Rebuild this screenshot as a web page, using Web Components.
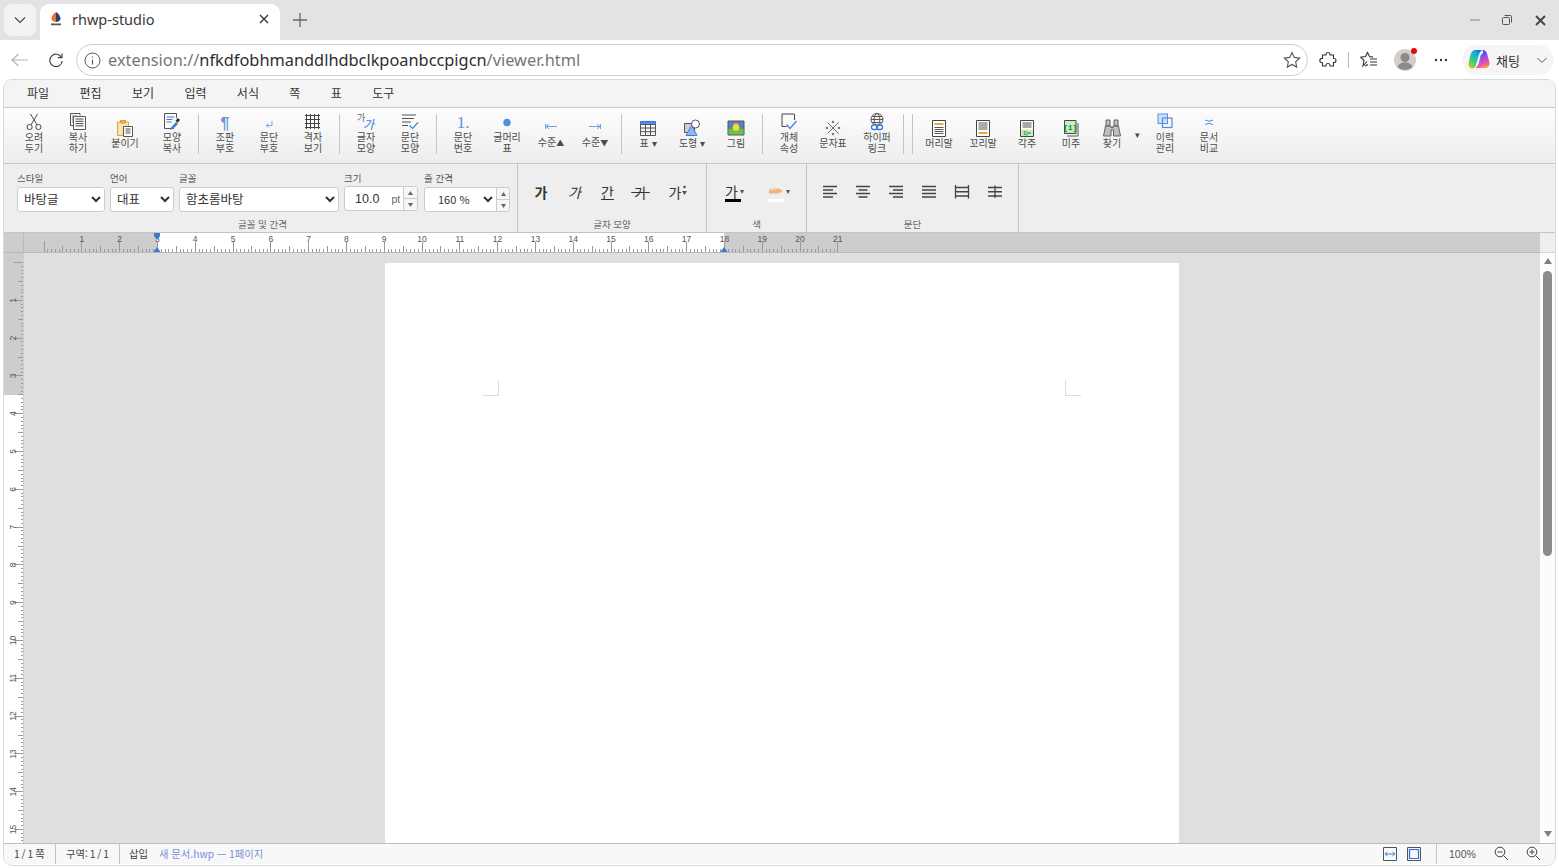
<!DOCTYPE html>
<html lang="ko">
<head>
<meta charset="utf-8">
<title>rhwp-studio</title>
<style>
    html, body { margin: 0; height: 100%; overflow: hidden; background: #fff; }
    body { display: flex; flex-direction: column; height: 868px; font-family: "Noto Sans CJK KR", "Noto Sans", sans-serif; }
</style>
</head>
<body>
<browser-tabs></browser-tabs>
<browser-bar></browser-bar>
<hwp-app>
    <hwp-menu></hwp-menu>
    <hwp-toolbar>
        <tool-btn><svg slot="icon" width="18" height="18" viewBox="0 0 18 18" fill="none" stroke="#4a4a4a"><circle cx="4.6" cy="14" r="2.6"/><circle cx="13.4" cy="14" r="2.6"/><path d="M6 11.8 12.6 .8M12 11.8 5.4 .8"/></svg>오려<br>두기</tool-btn>
        <tool-btn><svg slot="icon" width="18" height="18" viewBox="0 0 18 18" fill="none" stroke="#555"><path d="M11 2.5V.5H1.5v12H4"/><path d="M4.5 3.5h12v13h-12z" fill="#fff"/><path d="M6.5 6h8M6.5 8.3h8M6.5 10.6h8M6.5 12.9h8" stroke="#444"/><path d="M3 3h5M3 5h1M3 7h1M3 9h1" stroke="#777"/></svg>복사<br>하기</tool-btn>
        <tool-btn w="50"><svg slot="icon" width="18" height="18" viewBox="0 0 18 18" fill="none"><path d="M1.5 3h11v13.5h-11z" fill="#fbe3ad" stroke="#e3a33a"/><path d="M4.5 1.5h5V4h-5z" fill="#eeb04a" stroke="#d99a30"/><path d="M7.5 7.5h9v10h-9z" fill="#fff" stroke="#555"/><path d="M9.5 10h5M9.5 12h5M9.5 14h5" stroke="#555"/></svg>붙이기</tool-btn>
        <tool-btn><svg slot="icon" width="18" height="18" viewBox="0 0 18 18" fill="none"><path d="M11 15.5H1.5V.5h12V5" stroke="#555"/><path d="M3.5 4h8M3.5 6.5h6M3.5 9h5" stroke="#3f7fd6" stroke-width="1.2"/><path d="M8 14.5 13 9l2 2-5 5-2.6.8z" fill="#3f7fd6"/><path d="M12.5 7.5 15 5l2 2-2.5 3z" fill="#333"/></svg>모양<br>복사</tool-btn>
        <tool-sep></tool-sep>
        <tool-btn><svg slot="icon" width="18" height="18" viewBox="0 0 18 18" overflow="visible"><text x="9" y="16" text-anchor="middle" font-size="16" font-weight="700" fill="#6a97cf" font-family="Liberation Sans">¶</text></svg>조판<br>부호</tool-btn>
        <tool-btn><svg slot="icon" width="18" height="18" viewBox="0 0 18 18" fill="none" stroke="#7ba6d8"><path d="M12 8v4.5H6.5"/><path d="M8.5 10.5l-2 2 2 2"/></svg>문단<br>부호</tool-btn>
        <tool-btn><svg slot="icon" width="18" height="18" viewBox="0 0 18 18" fill="none" stroke="#444"><path d="M1 2.500h15M1 6.500h15M1 10.500h15M1 14.500h15M2.500 1v15M6.500 1v15M10.500 1v15M14.500 1v15"/></svg>격자<br>보기</tool-btn>
        <tool-sep></tool-sep>
        <tool-btn><svg slot="icon" width="18" height="18" viewBox="0 0 18 18" overflow="visible"><text x="0" y="8" font-size="9" fill="#666" font-family="Noto Sans CJK KR">가</text><text x="6" y="16" font-size="12" font-style="italic" fill="#2f7fe0" font-family="Noto Sans CJK KR">가</text></svg>글자<br>모양</tool-btn>
        <tool-btn><svg slot="icon" width="18" height="18" viewBox="0 0 18 18" fill="none"><path d="M1 2h14M1 5.500h12M1 9h9M1 12.500h6" stroke="#555"/><path d="M8.500 12.500l3 3 5.500-6" stroke="#3f85dd" stroke-width="1.200"/></svg>문단<br>모양</tool-btn>
        <tool-sep></tool-sep>
        <tool-btn><svg slot="icon" width="20" height="18" viewBox="0 0 20 18" overflow="visible"><text x="10" y="15" text-anchor="middle" font-size="17" fill="#5b93d8" font-family="Liberation Serif">1.</text></svg>문단<br>번호</tool-btn>
        <tool-btn><svg slot="icon" width="18" height="18" viewBox="0 0 18 18"><circle cx="9" cy="9.500" r="3.700" fill="#4f8fdd"/></svg>글머리<br>표</tool-btn>
        <tool-btn><svg slot="icon" width="18" height="18" viewBox="0 0 18 18" fill="none" stroke="#6fa3e0"><path d="M3.500 6v5M4 8.500h11M4 8.500l3-2.300M4 8.500l3 2.300"/></svg>수준<span style="font-size:8px">▲</span></tool-btn>
        <tool-btn><svg slot="icon" width="18" height="18" viewBox="0 0 18 18" fill="none" stroke="#6fa3e0"><path d="M14.500 6v5M3 8.500h11M14 8.500l-3-2.300M14 8.500l-3 2.300"/></svg>수준<span style="font-size:8px">▼</span></tool-btn>
        <tool-sep></tool-sep>
        <tool-btn><svg slot="icon" width="18" height="18" viewBox="0 0 18 18" fill="none"><path d="M1.500 2.500h15v3h-15z" fill="#4f8fe8" stroke="#3a78d0"/><path d="M1.500 5.500h15v11h-15zM1.500 9h15M1.500 12.700h15M6.500 5.500v11M11.500 5.500v11" stroke="#555"/></svg>표 ▾</tool-btn>
        <tool-btn><svg slot="icon" width="18" height="18" viewBox="0 0 18 18" fill="none"><path d="M1.500 4.500h10v9h-10z" fill="#cfcfcf" stroke="#555"/><circle cx="12.500" cy="5" r="4" fill="#fff" stroke="#555"/><path d="M8.500 6.500 14 16.500H3z" fill="#8fb8f0" stroke="#3f7fe0"/></svg>도형 ▾</tool-btn>
        <tool-btn><svg slot="icon" width="18" height="18" viewBox="0 0 18 18" fill="none"><path d="M1 2h16v14H1z" fill="#5a7fbf" stroke="#555"/><path d="M1.500 10h15v5.500h-15z" fill="#6fbf4a"/><circle cx="9" cy="8.500" r="3.300" fill="#f4dc2c"/><path d="M7 4.500l1 1.500 1-1.500 1 1.500 1-1.500" stroke="#f4dc2c"/></svg>그림</tool-btn>
        <tool-sep></tool-sep>
        <tool-btn><svg slot="icon" width="18" height="18" viewBox="0 0 18 18" fill="none"><path d="M14 1H2v12.500h4.500" stroke="#444"/><path d="M14.500 1v6" stroke="#444"/><path d="M6.500 11.500l3.500 4 6.500-7.500" stroke="#3f85dd" stroke-width="1.300"/></svg>개체<br>속성</tool-btn>
        <tool-btn><svg slot="icon" width="18" height="18" viewBox="0 0 18 18" fill="none" stroke="#666"><path d="M3.500 3.500l11 11M14.500 3.500l-11 11"/><circle cx="9" cy="3" r=".8" fill="#666"/><circle cx="9" cy="15" r=".8" fill="#666"/><circle cx="3" cy="9" r=".8" fill="#666"/><circle cx="15" cy="9" r=".8" fill="#666"/></svg>문자표</tool-btn>
        <tool-btn><svg slot="icon" width="18" height="18" viewBox="0 0 18 18" fill="none"><g stroke="#555"><circle cx="9" cy="6.500" r="6"/><ellipse cx="9" cy="6.500" rx="2.800" ry="6"/><path d="M3 6.500h12M4 3.500h10M4 9.500h10"/></g><g stroke="#3a78d8" stroke-width="1.300"><rect x="3.500" y="12" width="6" height="4.500" rx="2.200" fill="#fff"/><rect x="8.500" y="12" width="6" height="4.500" rx="2.200"/></g></svg>하이퍼<br>링크</tool-btn>
        <tool-sep></tool-sep>
        <tool-sep></tool-sep>
        <tool-btn><svg slot="icon" width="18" height="18" viewBox="0 0 18 18" fill="none"><path d="M2.500 1.500h13v16h-13z" fill="#fff" stroke="#444"/><path d="M4.500 5h9" stroke="#f0a830" stroke-width="2"/><path d="M4.500 8.500h9M4.500 10.500h9M4.500 12.500h9M4.500 14.500h9" stroke="#555"/></svg>머리말</tool-btn>
        <tool-btn><svg slot="icon" width="18" height="18" viewBox="0 0 18 18" fill="none"><path d="M2.500 1.500h13v16h-13z" fill="#fff" stroke="#444"/><path d="M4.500 4h9M4.500 6h9M4.500 8h9M4.500 10h9" stroke="#555"/><path d="M4.500 14h9" stroke="#f0a830" stroke-width="2"/></svg>꼬리말</tool-btn>
        <tool-btn><svg slot="icon" width="18" height="18" viewBox="0 0 18 18" fill="none" overflow="visible"><path d="M2.500 1.500h13v16h-13z" fill="#fff" stroke="#444"/><path d="M4.500 4h9M4.500 6h9M4.500 8h9" stroke="#555"/><path d="M3 10.500h12v6.500H3z" fill="#c9ecc6"/><text x="9" y="16" text-anchor="middle" font-size="5.500" font-weight="700" fill="#1a8f1a" font-family="Liberation Sans">1)=</text></svg>각주</tool-btn>
        <tool-btn><svg slot="icon" width="18" height="18" viewBox="0 0 18 18" fill="none" overflow="visible"><path d="M16 4v13H5" stroke="#555"/><path d="M2.500 1.500h11.500v13H2.500z" fill="#c9ecc6" stroke="#444"/><text x="8.200" y="10.500" text-anchor="middle" font-size="7.500" font-weight="700" fill="#0f8f0f" font-family="Liberation Mono">[1]</text></svg>미주</tool-btn>
        <tool-btn w="38"><svg slot="icon" width="18" height="18" viewBox="0 0 18 18" fill="#bdbdbd" stroke="#555" stroke-width=".9"><path d="M3 1h4v6H3zM11 1h4v6h-4z"/><path d="M2.500 7h5.500v1.500h2V7h5.500l2 10h-7v-6H8v6H.5z"/></svg>찾기</tool-btn>
        <tool-drop>▾</tool-drop>
        <tool-btn><svg slot="icon" width="18" height="18" viewBox="0 0 18 18" fill="none" stroke="#4f8fe8"><rect x="2" y="1" width="9.500" height="9.500" fill="#cfe2fa"/><rect x="6.500" y="5" width="9.500" height="9.500" stroke-width="1.200"/></svg>이력<br>관리</tool-btn>
        <tool-btn><svg slot="icon" width="18" height="18" viewBox="0 0 18 18" fill="none" stroke="#4f8fe8"><path d="M5 7q4 2.500 8 0M5 11.500q4-2.500 8 0"/></svg>문서<br>비교</tool-btn>
    </hwp-toolbar>
    <hwp-format>
        <fmt-group caption="글꼴 및 간격" width="514" pad="13" capshift="4">
            <hwp-select label="스타일" width="88" options="바탕글,본문,개요 1"></hwp-select>
            <hwp-select label="언어" width="64" options="대표,한글,영문"></hwp-select>
            <hwp-select label="글꼴" width="160" options="함초롬바탕,함초롬돋움,맑은 고딕"></hwp-select>
            <size-field label="크기"></size-field>
            <hwp-select label="줄 간격" width="73" spin center options="160 %,100 %,200 %" style="margin-left:1px"></hwp-select>
        </fmt-group>
        <fmt-group caption="글자 모양" width="189" pad="6" top>
            <glyph-btn w="34"><b>가</b></glyph-btn>
            <glyph-btn w="33"><i>가</i></glyph-btn>
            <glyph-btn w="33"><u>간</u></glyph-btn>
            <glyph-btn w="33"><s>&#8201;가&#8201;</s></glyph-btn>
            <glyph-btn w="43"><span>가</span><svg width="7" height="14" viewBox="0 0 7 14" fill="#555"><circle cx="3.500" cy="2" r="1.300"/><path d="M1 6h5L3.500 10z"/></svg></glyph-btn>
        </fmt-group>
        <fmt-group caption="색" width="100" pad="0" top>
            <color-btn w="52" bar="#000"><span>가</span></color-btn>
            <color-btn w="36" bar="#fff"><svg width="16" height="10" viewBox="0 0 16 10"><path d="M1 2.500h9.500L15 5l-4.500 2.500H1z" fill="#e7b878"/><path d="M1 3.500h6" stroke="#f6dcb6"/></svg></color-btn>
        </fmt-group>
        <fmt-group caption="문단" width="212" pad="6.500" top>
            <align-btn kind="left"></align-btn>
            <align-btn kind="center"></align-btn>
            <align-btn kind="right"></align-btn>
            <align-btn kind="justify"></align-btn>
            <align-btn kind="dist"></align-btn>
            <align-btn kind="split"></align-btn>
        </fmt-group>
    </hwp-format>
    <hwp-workspace></hwp-workspace>
    <hwp-status></hwp-status>
</hwp-app>

<script>
const CJK = '"Noto Sans CJK KR", "Noto Sans", sans-serif';
const SPIN = `<i><svg width="5" height="4" viewBox="0 0 5 4" fill="#666"><path d="M2.500 0 5 4H0z"/></svg></i><i><svg width="5" height="4" viewBox="0 0 5 4" fill="#666"><path d="M0 0h5L2.500 4z"/></svg></i>`;

class BrowserTabs extends HTMLElement {
    constructor(){
        super();
        this.attachShadow({mode:"open"}).innerHTML = `
            <style>
                :host { display: flex; height: 40px; flex: none; background: #e3e3e3; box-sizing: border-box; padding: 4px 0 0 4px; align-items: flex-start; }
                .list { width: 32px; height: 32px; border-radius: 8px; background: #f3f3f3; display: flex; align-items: center; justify-content: center; }
                .tab { width: 240px; height: 36px; margin-left: 4px; background: #fff; border-radius: 9px 9px 0 0; display: flex; align-items: center; box-sizing: border-box; padding: 0 10px 6px 10px; }
                .fav { width: 12px; height: 14px; flex: none; }
                .title { margin-left: 10px; font: 14.500px "Noto Sans", sans-serif; color: #3a3a3a; flex: 1; }
                .plus { margin: 7px 0 0 11px; width: 18px; height: 18px; }
                .ctl { margin-left: auto; display: flex; align-items: center; height: 32px; padding-right: 13px; }
                .ctl svg + svg { margin-left: 22px; }
                .ctl svg + svg + svg { margin-left: 23px; }
            </style>
            <div class="list"><svg width="14" height="14" viewBox="0 0 14 14" fill="none" stroke="#444" stroke-width="1.100"><path d="M2 4.500 7 9.500 12 4.500"/></svg></div>
            <div class="tab">
                <svg class="fav" viewBox="0 0 12 14"><path d="M6 0C3 2 1.500 4.500 1.500 6.500 1.500 8.800 3.500 10 6 10z" fill="#e8732a"/><path d="M6 0c3 2 4.500 4.500 4.500 6.500C10.500 8.800 8.500 10 6 10z" fill="#26456e"/><rect x="1" y="11.500" width="10" height="1.800" fill="#555"/></svg>
                <span class="title">rhwp-studio</span>
                <svg width="12" height="12" viewBox="0 0 12 12" stroke="#333" stroke-width="1.300"><path d="M2 2l8 8M10 2l-8 8"/></svg>
            </div>
            <svg class="plus" viewBox="0 0 18 18" stroke="#666" stroke-width="1.300"><path d="M9 2v14M2 9h14"/></svg>
            <div class="ctl">
                <svg width="10" height="10" viewBox="0 0 10 10" stroke="#9a9a9a" stroke-width="1.200"><path d="M0 5h10"/></svg>
                <svg width="10" height="10" viewBox="0 0 10 10" fill="none" stroke="#555"><rect x=".5" y="2.500" width="7" height="7" rx="1"/><path d="M2.500 .5h6a1 1 0 0 1 1 1v6"/></svg>
                <svg width="11" height="11" viewBox="0 0 11 11" stroke="#444" stroke-width="1.900"><path d="M1 1l9 9M10 1l-9 9"/></svg>
            </div>`;
    }
}
customElements.define("browser-tabs",BrowserTabs);

class BrowserBar extends HTMLElement {
    constructor(){
        super();
        this.attachShadow({mode:"open"}).innerHTML = `
            <style>
                :host { display: flex; height: 39px; flex: none; align-items: center; background: #fff; box-sizing: border-box; padding: 4px 5px 3px 0; }
                .nav { display: flex; justify-content: center; flex: none; }
                .addr { flex: 1; height: 32px; margin-left: 4px; border: 1px solid #cfcfcf; border-radius: 16px; display: flex; align-items: center; box-sizing: border-box; padding: 0 6px 0 7px; }
                .url { margin-left: 7px; flex: 1; font: 16.350px "Noto Sans", sans-serif; color: #767676; }
                .url b { font-weight: 400; color: #2e2e2e; }
                .tool { display: flex; align-items: center; justify-content: center; flex: none; }
                .sep { width: 1px; height: 16px; background: #bbb; flex: none; }
                .avatar { position: relative; width: 22px; height: 22px; }
                .dot { position: absolute; right: -1px; top: -1px; width: 6px; height: 6px; border-radius: 50%; background: #e00b0b; }
                .chat { width: 92px; height: 30px; border-radius: 15px; background: #f5f5f5; display: flex; align-items: center; margin-left: 14px; padding-left: 6px; box-sizing: border-box; flex: none; }
                .chat span { margin-left: 6px; font: 13px ${CJK}; color: #333; flex: 1; }
                .chat svg:last-child { margin-right: 6px; }
            </style>
            <div class="nav" style="width:40px"><svg width="18" height="14" viewBox="0 0 18 14" fill="none" stroke="#b4b4b4" stroke-width="1.200"><path d="M17 7H1M7.500 1 1 7l6.500 6"/></svg></div>
            <div class="nav" style="width:32px"><svg width="16" height="16" viewBox="0 0 16 16" fill="none" stroke="#444" stroke-width="1.200"><path d="M13.500 5.500A6.200 6.200 0 1 0 14.200 9"/><path d="M14 1.500v4.200H9.800"/></svg></div>
            <div class="addr">
                <svg width="17" height="17" viewBox="0 0 17 17" fill="none" stroke="#555"><circle cx="8.500" cy="8.500" r="7.500"/><path d="M8.500 7.500v5M8.500 4.500v1.300" stroke-width="1.100"/></svg>
                <span class="url">extension://<b>nfkdfobhmanddlhdbclkpoanbccpigcn</b>/viewer.html</span>
                <svg width="18" height="18" viewBox="0 0 18 18" fill="none" stroke="#555" stroke-width="1.100"><path d="M9 1.500l2.300 4.900 5.300.7-3.900 3.700 1 5.300L9 13.500l-4.700 2.600 1-5.300L1.400 7.100l5.300-.7z"/></svg>
            </div>
            <div class="tool" style="margin-left:11px"><svg width="18" height="18" viewBox="0 0 18 18" fill="none" stroke="#333" stroke-width="1.100"><path d="M7 3.500a2 2 0 0 1 4 0V4h3.500v3.500H15a2 2 0 0 1 0 4h-.5V15H11v-.5a2 2 0 0 0-4 0v.5H3.500v-3.200H3a2.200 2.200 0 0 1 0-4.400h.5V4H7z"/></svg></div>
            <div class="sep" style="margin:0 11px"></div>
            <div class="tool"><svg width="18" height="18" viewBox="0 0 18 18" fill="none" stroke="#333" stroke-width="1.100"><path d="M7 10.500 3 15l1-5.500L.8 6.300 5.500 5.600 7.500 1.500l2 4.100 3.500.5"/><path d="M10 8h7M10 11h7M10 14h7M5 15l3-1.600"/></svg></div>
            <div class="tool avatar" style="margin-left:16px"><svg width="22" height="22" viewBox="0 0 22 22"><circle cx="11" cy="11" r="11" fill="#d2cfcb"/><circle cx="11" cy="8.500" r="4.500" fill="#8d8985"/><path d="M3.500 18c1.500-3.500 4-4.500 7.500-4.500s6 1 7.500 4.500a11 11 0 0 1-15 0z" fill="#8d8985"/></svg><i class="dot"></i></div>
            <div class="tool" style="margin-left:18px"><svg width="14" height="4" viewBox="0 0 14 4" fill="#333"><circle cx="2" cy="2" r="1.200"/><circle cx="7" cy="2" r="1.200"/><circle cx="12" cy="2" r="1.200"/></svg></div>
            <div class="chat">
                <svg width="22" height="22" viewBox="0 0 22 22">
                    <defs>
                        <linearGradient id="cpa" x1="0" y1="1" x2=".7" y2="0"><stop offset="0" stop-color="#f9c81e"/><stop offset=".4" stop-color="#3fd06a"/><stop offset=".8" stop-color="#18a8e0"/><stop offset="1" stop-color="#1470e8"/></linearGradient>
                        <linearGradient id="cpb" x1=".3" y1="0" x2=".7" y2="1"><stop offset="0" stop-color="#1c50e8"/><stop offset=".45" stop-color="#9a48f0"/><stop offset=".8" stop-color="#f0589a"/><stop offset="1" stop-color="#ff9a40"/></linearGradient>
                    </defs>
                    <path d="M14.500 1c2.500 0 4 1.500 4.700 4l2.300 8.500c.6 3-1.500 5.500-4.500 5.500H7.500c2.500 0 4-1.500 4.700-4l2-7.500C15 5 15.200 3 14.500 1z" fill="url(#cpb)"/>
                    <path d="M7 1h7.500c-2 .7-3.200 3-4 6l-2 7.500C8 17.500 6.300 19.500 3.800 19.500 1.300 19.500 0 17 .6 13.800l1.700-7.300C3 3.500 4.500 1 7 1z" fill="url(#cpa)"/>
                    <path d="M15.500 4.500c-2 0-2.800 1.500-3.300 3.500l-1.500 6c-.5 1.800-1.500 3.500-3 5h7c1.500-1 2.200-2.500 2.700-4.500z" fill="url(#cpb)" opacity=".9"/>
                </svg>
                <span>채팅</span>
                <svg width="12" height="12" viewBox="0 0 12 12" fill="none" stroke="#555"><path d="M1.500 4 6 8.500 10.500 4"/></svg>
            </div>`;
    }
}
customElements.define("browser-bar",BrowserBar);

class HwpApp extends HTMLElement {
    constructor(){
        super();
        this.attachShadow({mode:"open"}).innerHTML = `
            <style>
                :host { display: flex; flex-direction: column; height: 787px; flex: none; margin: 0 3px; box-sizing: border-box; border: 1px solid #d9d9d9; border-radius: 9px; overflow: hidden; font-family: ${CJK}; }
            </style>
            <slot></slot>`;
    }
}
customElements.define("hwp-app",HwpApp);

class HwpMenu extends HTMLElement {
    constructor(){
        super();
        var items = ["파일","편집","보기","입력","서식","쪽","표","도구"];
        this.attachShadow({mode:"open"}).innerHTML = `
            <style>
                :host { display: flex; height: 28px; flex: none; box-sizing: border-box; background: #f4f4f4; border-bottom: 1px solid #c9c9c9; padding: 0 0 2px 7.800px; align-items: center; }
                span { padding: 0 15.200px; font-size: 12px; color: #333; }
            </style>
            ${items.map(t=>`<span>${t}</span>`).join("")}`;
    }
}
customElements.define("hwp-menu",HwpMenu);

class HwpToolbar extends HTMLElement {
    constructor(){
        super();
        this.attachShadow({mode:"open"}).innerHTML = `
            <style>
                :host { display: flex; height: 56px; flex: none; box-sizing: border-box; background: linear-gradient(#fdfdfd,#ededed); border-bottom: 1px solid #c9c9c9; padding: 1px 0 0 8px; align-items: flex-start; }
            </style>
            <slot></slot>`;
    }
}
customElements.define("hwp-toolbar",HwpToolbar);

class ToolBtn extends HTMLElement {
    constructor(){
        super();
        this.attachShadow({mode:"open"}).innerHTML = `
            <style>
                :host { display: flex; flex-direction: column; align-items: center; justify-content: center; flex: none; width: 44px; height: 48px; font-size: 10px; line-height: 11px; color: #4c4c4c; text-align: center; }
                .icon { display: flex; height: 18px; justify-content: center; }
            </style>
            <div class="icon"><slot name="icon"></slot></div>
            <div><slot></slot></div>`;
        if(this.hasAttribute("w")) this.style.width = this.getAttribute("w")+"px";
    }
}
customElements.define("tool-btn",ToolBtn);

class ToolSep extends HTMLElement {
    constructor(){
        super();
        this.attachShadow({mode:"open"}).innerHTML = `
            <style>
                :host { display: block; flex: none; width: 1px; height: 40px; background: #c4c4c4; margin: 5px 4px 0 4px; }
            </style>`;
    }
}
customElements.define("tool-sep",ToolSep);

class ToolDrop extends HTMLElement {
    constructor(){
        super();
        this.attachShadow({mode:"open"}).innerHTML = `
            <style>
                :host { display: block; flex: none; width: 12px; padding-top: 20px; font-size: 9px; line-height: 12px; color: #444; text-align: center; }
            </style>
            <slot></slot>`;
    }
}
customElements.define("tool-drop",ToolDrop);

class HwpFormat extends HTMLElement {
    constructor(){
        super();
        this.attachShadow({mode:"open"}).innerHTML = `
            <style>
                :host { display: flex; height: 69px; flex: none; box-sizing: border-box; background: #eee; border-bottom: 1px solid #c4c4c4; }
            </style>
            <slot></slot>`;
    }
}
customElements.define("hwp-format",HwpFormat);

class FmtGroup extends HTMLElement {
    constructor(){
        super();
        this.attachShadow({mode:"open"}).innerHTML = `
            <style>
                :host { display: flex; flex-direction: column; flex: none; box-sizing: border-box; border-right: 1px solid #c4c4c4; padding-top: 8px; }
                :host([top]) { padding-top: 14px; }
                .body { flex: 1; display: flex; align-items: flex-start; gap: 0; }
                .cap { height: 14px; line-height: 14px; margin-bottom: 1px; text-align: center; font-size: 9.500px; color: #666; }
            </style>
            <div class="body"><slot></slot></div>
            <div class="cap" style="padding-left:${this.getAttribute("capshift")||0}px">${this.getAttribute("caption")}</div>`;
        this.style.width = this.getAttribute("width")+"px";
        this.shadowRoot.querySelector(".body").style.paddingLeft = this.getAttribute("pad")+"px";
    }
}
customElements.define("fmt-group",FmtGroup);

class HwpSelect extends HTMLElement {
    constructor(){
        super();
        var options = this.getAttribute("options").split(",");
        var spin = this.hasAttribute("spin");
        this.attachShadow({mode:"open"}).innerHTML = `
            <style>
                :host { display: block; flex: none; margin-right: 5px; }
                label { display: block; height: 12px; line-height: 12px; margin-bottom: 2px; font-size: 9.500px; color: #555; }
                .row { display: flex; }
                select { display: block; box-sizing: border-box; height: 25px; margin-top: 1px; font: 12.500px ${CJK}; color: #333; background: #fff; border: 1px solid #ccc; border-radius: 3px; padding: 0 0 2px 2px; outline: none; }
                :host([center]) select { padding-left: 9px; font-size: 11px; border-radius: 3px 0 0 3px; }
                .spin { width: 13px; height: 25px; margin-top: 1px; box-sizing: border-box; border: 1px solid #ccc; border-left: 0; border-radius: 0 3px 3px 0; background: #f6f6f6; display: flex; flex-direction: column; }
                .spin i { flex: 1; display: flex; align-items: center; justify-content: center; }
                .spin i + i { border-top: 1px solid #ccc; }
            </style>
            <label>${this.getAttribute("label")}</label>
            <div class="row">
                <select style="width:${this.getAttribute("width")}px">${options.map(o=>`<option>${o}</option>`).join("")}</select>
                ${spin?`<div class="spin">${SPIN}</div>`:""}
            </div>`;
    }
}
customElements.define("hwp-select",HwpSelect);

class SizeField extends HTMLElement {
    constructor(){
        super();
        this.attachShadow({mode:"open"}).innerHTML = `
            <style>
                :host { display: block; flex: none; margin-right: 5px; }
                label { display: block; height: 12px; line-height: 12px; margin-bottom: 2px; font-size: 9.500px; color: #555; }
                .row { display: flex; height: 25px; margin-top: 1px; box-sizing: border-box; width: 74px; border: 1px solid #ccc; border-radius: 3px; background: #fff; align-items: center; }
                .v { margin-left: 10px; width: 37px; font: 12.500px "Liberation Sans", sans-serif; color: #333; }
                .u { width: 12px; font: 10.500px "Liberation Sans", sans-serif; color: #666; }
                .spin { margin-left: auto; width: 13px; height: 23px; border-left: 1px solid #ccc; background: #f6f6f6; display: flex; flex-direction: column; border-radius: 0 3px 3px 0; }
                .spin i { flex: 1; display: flex; align-items: center; justify-content: center; }
                .spin i + i { border-top: 1px solid #ccc; }
            </style>
            <label>${this.getAttribute("label")}</label>
            <div class="row"><span class="v">10.0</span><span class="u">pt</span><div class="spin">${SPIN}</div></div>`;
    }
}
customElements.define("size-field",SizeField);

class GlyphBtn extends HTMLElement {
    constructor(){
        super();
        this.attachShadow({mode:"open"}).innerHTML = `
            <style>
                :host { display: flex; flex: none; height: 28px; align-items: center; justify-content: center; font-size: 14px; color: #333; }
                ::slotted(b) { font-weight: 700; }
            </style>
            <slot></slot>`;
        this.style.width = this.getAttribute("w")+"px";
    }
}
customElements.define("glyph-btn",GlyphBtn);

class ColorBtn extends HTMLElement {
    constructor(){
        super();
        this.attachShadow({mode:"open"}).innerHTML = `
            <style>
                :host { display: flex; flex: none; height: 28px; justify-content: center; font-size: 14px; color: #333; }
                .in { display: flex; flex-direction: column; align-items: flex-start; margin-top: 4px; margin-left: 3px; }
                .g { display: flex; align-items: center; height: 17px; }
                .a { font-size: 8px; color: #555; margin-left: 2px; }
                .bar { width: 16px; height: 3px; }
            </style>
            <div class="in">
                <div class="g"><slot></slot><span class="a">▾</span></div>
                <div class="bar" style="background:${this.getAttribute("bar")}"></div>
            </div>`;
        this.style.width = this.getAttribute("w")+"px";
    }
}
customElements.define("color-btn",ColorBtn);

class AlignBtn extends HTMLElement {
    constructor(){
        super();
        var paths = {
            left: "M1 1.500h14M1 5h10M1 8.500h14M1 12h10",
            center: "M1 1.500h14M3.500 5h9M1 8.500h14M3.500 12h9",
            right: "M1 1.500h14M5 5h10M1 8.500h14M5 12h10",
            justify: "M1 1.500h14M1 5h14M1 8.500h14M1 12h14",
            dist: "M1.500 0v13.500M14.500 0v13.500M2 2.500h12M2 6.750h12M2 11h12",
            split: "M1 2.500h14M1 6.750h14M1 11h14M8 .5v12.500"
        };
        this.attachShadow({mode:"open"}).innerHTML = `
            <style>
                :host { display: flex; flex: none; width: 33px; height: 28px; align-items: center; justify-content: center; }
            </style>
            <svg width="16" height="14" viewBox="0 0 16 14" fill="none" stroke="#444" stroke-width="1.300"><path d="${paths[this.getAttribute("kind")]}"/></svg>`;
    }
}
customElements.define("align-btn",AlignBtn);

class HwpRuler extends HTMLElement {
    constructor(){
        super();
        var vertical = this.hasAttribute("vertical");
        var cm = 37.8;
        var origin = +this.getAttribute("origin");
        var count = +this.getAttribute("count");
        var length = +this.getAttribute("length");
        var marks = "";
        var labels = "";
        var across = 20;
        for(var i=0;i<=count*10;i++){
            var p = origin+i*cm/10;
            if(p>length) break;
            var size = i%10==0?10:(i%5==0?6:3);
            if(i%10==0 && i==0) size = vertical?10:11;
            if(vertical) marks += `M${across-size} ${p.toFixed(1)}H${across-1}`;
            else marks += `M${p.toFixed(1)} ${across-1-size}V${across-1}`;
            if(i%10==0 && i>0){
                if(vertical) labels += `<text transform="translate(11 ${p.toFixed(1)}) rotate(-90)" text-anchor="middle" y="1">${i/10}</text>`;
                else labels += `<text x="${p.toFixed(1)}" y="9" text-anchor="middle">${i/10}</text>`;
            }
        }
        var w = vertical?across:length, h = vertical?length:across;
        var start = +this.getAttribute("start"), end = +this.getAttribute("end");
        var band = vertical
            ? `<rect width="${across}" height="${start}" fill="#cdcdcd"/>`
            : `<rect x="${start}" width="${end-start}" height="${across}" fill="#fff"/>`;
        this.attachShadow({mode:"open"}).innerHTML = `
            <style>
                :host { display: block; background: ${vertical?"#fff":"#cdcdcd"}; overflow: hidden; }
                svg { display: block; }
                text { font: 8.500px "Liberation Sans", sans-serif; fill: #555; }
            </style>
            <svg width="${w}" height="${h}" viewBox="0 0 ${w} ${h}">
                ${band}
                <path d="${marks}" stroke="#9a9a9a" fill="none" shape-rendering="crispEdges"/>
                ${labels}
                ${vertical?"":`<g fill="#3a7ac8"><path d="M${start-3} 0h6v3l-3 4-3-4z"/><path d="M${start-3.5} 19l3.500-5 3.500 5z"/><path d="M${end-3.5} 19l3.500-5 3.500 5z"/></g><path d="M0 19.500H${w}" stroke="#b9b9b9"/>`}
            </svg>`;
    }
}
customElements.define("hwp-ruler",HwpRuler);

class HwpPage extends HTMLElement {
    constructor(){
        super();
        this.attachShadow({mode:"open"}).innerHTML = `
            <style>
                :host { display: block; position: relative; width: 794px; height: 1123px; margin: 10px auto 0; background: #fff; }
                i { position: absolute; top: 117px; width: 15px; height: 15px; border-bottom: 1px solid #dcdcdc; }
                .l { left: 98px; border-right: 1px solid #dcdcdc; }
                .r { left: 680px; border-left: 1px solid #dcdcdc; }
            </style>
            <i class="l"></i><i class="r"></i>`;
    }
}
customElements.define("hwp-page",HwpPage);

class HwpScrollbar extends HTMLElement {
    constructor(){
        super();
        this.attachShadow({mode:"open"}).innerHTML = `
            <style>
                :host { display: flex; flex-direction: column; align-items: center; background: #fcfcfc; box-sizing: border-box; padding-top: 5px; }
                .up, .down { width: 0; height: 0; border: 4.500px solid transparent; border-top: 0; border-bottom: 6px solid #808080; flex: none; }
                .down { margin-top: auto; margin-bottom: 6px; border-bottom: 0; border-top: 6px solid #808080; }
                .thumb { width: 9px; height: 285px; margin-top: 7px; border-radius: 5px; background: #8b8b8b; flex: none; }
            </style>
            <div class="up"></div><div class="thumb"></div><div class="down"></div>`;
    }
}
customElements.define("hwp-scrollbar",HwpScrollbar);

class HwpWorkspace extends HTMLElement {
    constructor(){
        super();
        this.attachShadow({mode:"open"}).innerHTML = `
            <style>
                :host { display: grid; flex: none; height: 610px; grid-template-columns: 20px 1fr 15px; grid-template-rows: 20px 1fr; background: #dfdfdf; }
                .corner { background: #cdcdcd; border-right: 1px solid #b9b9b9; border-bottom: 1px solid #b9b9b9; box-sizing: border-box; }
                .top { min-width: 0; }
                .side { border-right: 1px solid #ccc; box-sizing: border-box; }
                .head { background: #eee; border-bottom: 1px solid #d4d4d4; box-sizing: border-box; }
                .view { overflow: hidden; min-width: 0; }
            </style>
            <div class="corner"></div>
            <hwp-ruler class="top" origin="20" count="21" length="1516" start="133" end="700"></hwp-ruler>
            <div class="head"></div>
            <hwp-ruler class="side" vertical origin="9.500" count="16" length="590" start="142"></hwp-ruler>
            <div class="view"><hwp-page></hwp-page></div>
            <hwp-scrollbar></hwp-scrollbar>`;
    }
}
customElements.define("hwp-workspace",HwpWorkspace);

class HwpStatus extends HTMLElement {
    constructor(){
        super();
        this.attachShadow({mode:"open"}).innerHTML = `
            <style>
                :host { display: flex; flex: none; height: 21px; box-sizing: border-box; border-top: 1px solid #bdbdbd; background: #f8f8f8; font-size: 10.300px; color: #444; align-items: stretch; white-space: nowrap; }
                div { display: flex; align-items: center; box-sizing: border-box; padding-bottom: 1px; }
                .c { border-right: 1px solid #c4c4c4; padding: 0 0 1px 10px; word-spacing: -1px; }
                .file { color: #7a8fd8; margin-left: 11px; }
                .right { margin-left: auto; }
                svg { display: block; }
            </style>
            <div class="c" style="width:52px">1 / 1 쪽</div>
            <div class="c" style="width:64px">구역: 1 / 1</div>
            <div style="padding-left:9px">삽입</div>
            <div class="file">새 문서.hwp — 1페이지</div>
            <div class="right" style="gap:10px;padding-right:15px">
                <svg width="14" height="14" viewBox="0 0 14 14" fill="none"><path d="M.5.500h13v13H.5z" stroke="#555"/><path d="M2 7h10M2 7l2.500-2M2 7l2.500 2M12 7l-2.500-2M12 7l-2.500 2" stroke="#3f85dd"/></svg>
                <svg width="14" height="14" viewBox="0 0 14 14" fill="none"><path d="M.5.500h13v13H.5z" stroke="#555"/><path d="M2.500 2.500h9v9h-9z" stroke="#2f6fe8" stroke-width="1.200"/></svg>
            </div>
            <div style="border-left:1px solid #c4c4c4;width:119px;padding-left:12px;color:#555;font:10.500px 'Liberation Sans',sans-serif">100%
                <svg style="margin-left:18px" width="15" height="15" viewBox="0 0 15 15" fill="none" stroke="#444"><circle cx="6" cy="6" r="4.800"/><path d="M3.500 6h5M9.500 9.500l4.500 4.500"/></svg>
                <svg style="margin-left:17px" width="15" height="15" viewBox="0 0 15 15" fill="none" stroke="#444"><circle cx="6" cy="6" r="4.800"/><path d="M3.500 6h5M6 3.500v5M9.500 9.500l4.500 4.500"/></svg>
            </div>`;
    }
}
customElements.define("hwp-status",HwpStatus);
</script>
</body>
</html>
